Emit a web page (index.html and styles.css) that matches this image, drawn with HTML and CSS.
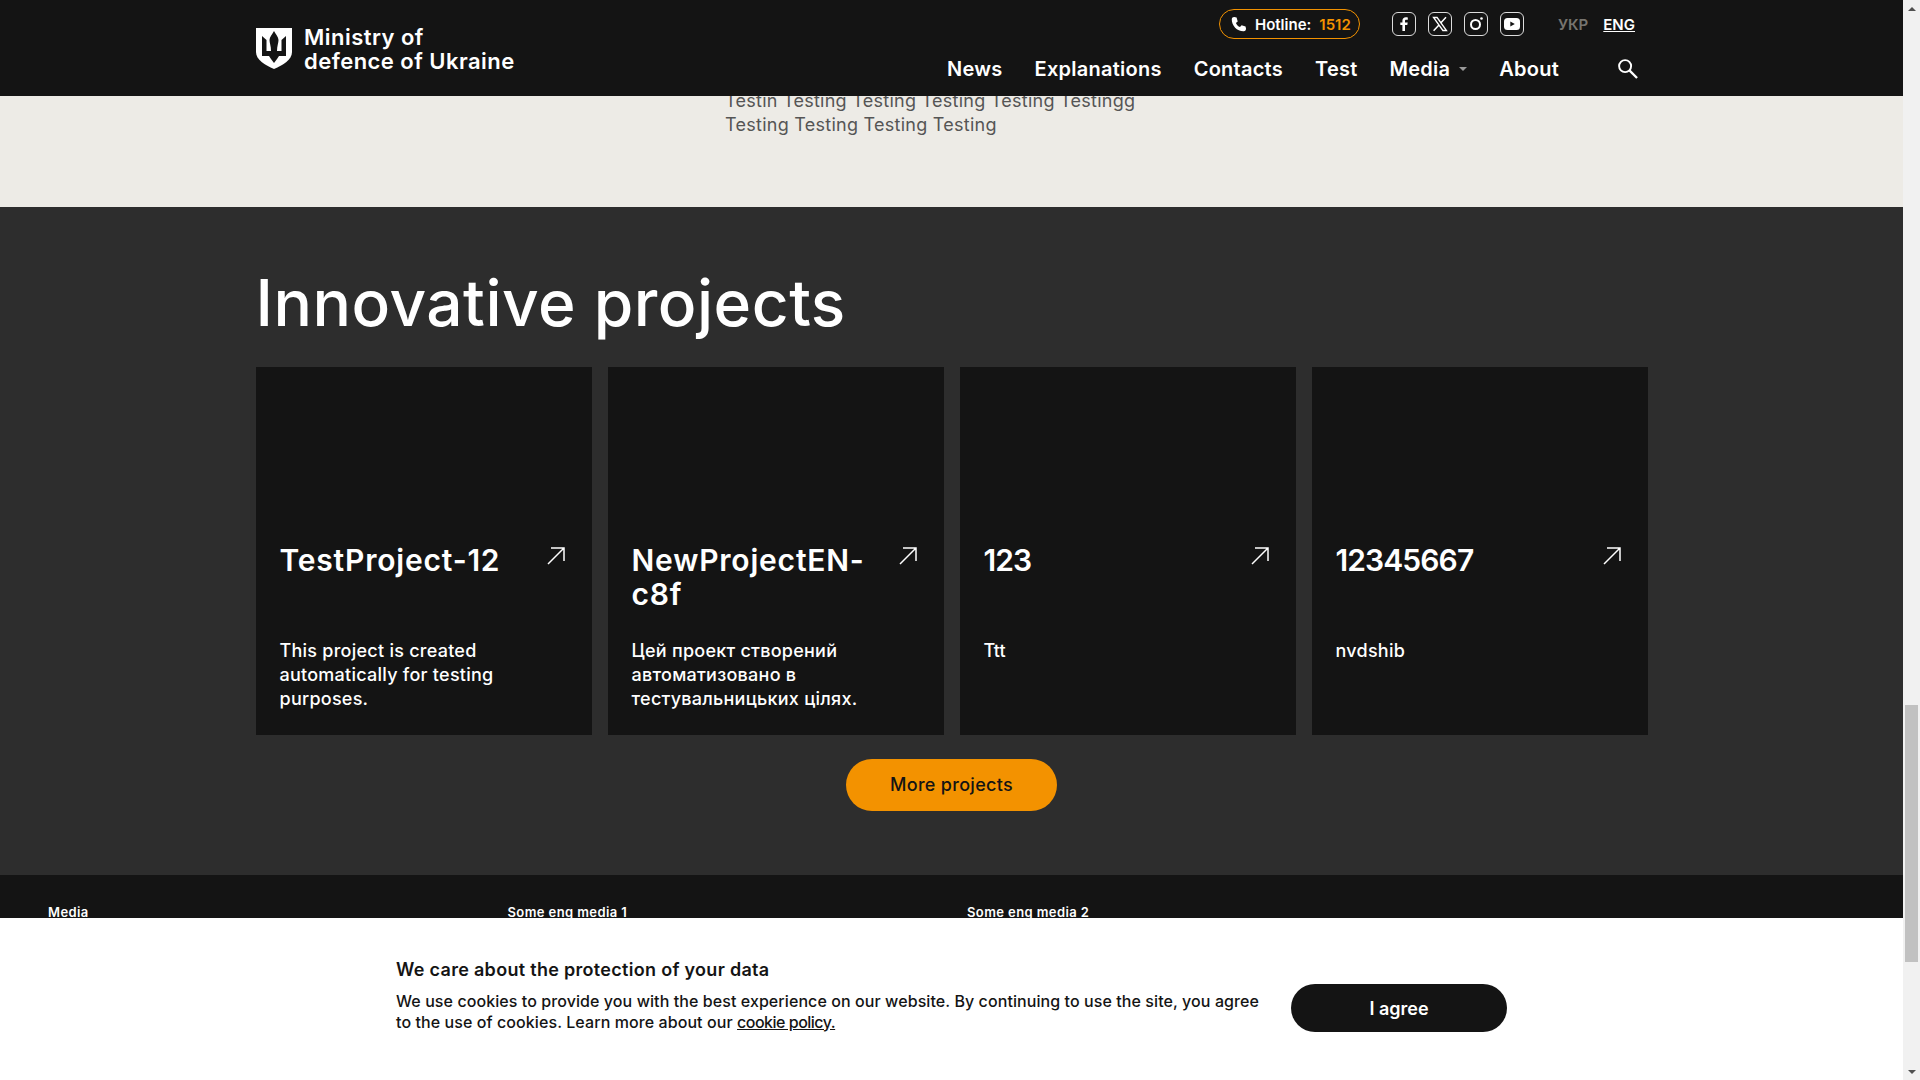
FILE: index.html
```html
<!DOCTYPE html>
<html lang="en">
<head>
<meta charset="utf-8">
<title>Ministry of defence of Ukraine</title>
<link rel="stylesheet" href="styles.css">
</head>
<body>
<div class="app">
  <div class="page">
    <header class="header">
      <a class="brand" href="#">
        <svg class="shield" viewBox="0 0 36 41" width="36" height="41"><path fill="#fff" d="M0 0H36V24C36 32 27 37 18 41C9 37 0 32 0 24Z"/><path fill="#141414" d="M6 8L10.5 12V23H15C15 18 13.5 15 13.5 12C13.5 9 16.5 6 18 3C19.5 6 22.5 9 22.5 12C22.5 15 21 18 21 23H25.5V12L30 8V28H23L21 31L18 35L15 31L13 28H6Z"/></svg>
        <span class="brand-name">Ministry of<br>defence of Ukraine</span>
      </a>
      <div class="header-right">
        <div class="topline">
          <a class="hotline" href="#">
            <svg viewBox="0 0 24 24" width="19" height="19"><path fill="#fff" d="M6.6 2.5l3 .6 1.4 5-2.3 2c1 2.400 2.800 4.200 5.200 5.200l2-2.300 5 1.400.6 3c.1 1.500-1 3-2.800 3.100C10.500 20.800 3.200 13.500 3.500 5.300 3.600 3.500 5.100 2.400 6.600 2.500z"/></svg>
            <span>Hotline:</span><span class="hotline-num">1512</span>
          </a>
          <div class="socials">
            <a class="social" href="#"><svg viewBox="0 0 24 24" width="24" height="24"><path fill="#fff" d="M13 19v-6h2.300l.4-2.500H13V9c0-.8.3-1.300 1.400-1.300h1.400V5.400c-.4 0-1.200-.1-2-.1-2 0-3.400 1.200-3.400 3.500v1.700H8.300V13h2.100v6z"/></svg></a>
            <a class="social" href="#"><svg viewBox="0 0 24 24" width="24" height="24"><path fill="none" stroke="#fff" stroke-width="1.300" d="M5.500 5.500h3.600l9.400 13h-3.600z"/><path fill="none" stroke="#fff" stroke-width="1.500" d="M18 5.200l-5.300 5.900M11 13l-5.400 5.800"/></svg></a>
            <a class="social" href="#"><svg viewBox="0 0 24 24" width="24" height="24"><circle cx="11.500" cy="12.500" r="4.500" fill="none" stroke="#fff" stroke-width="2"/><circle cx="17.500" cy="6.500" r="1.300" fill="#fff"/></svg></a>
            <a class="social" href="#"><svg viewBox="0 0 24 24" width="24" height="24"><rect x="4" y="6" width="16" height="12" rx="3.500" fill="#fff"/><path fill="#141414" d="M10.300 9.500l4.500 2.500-4.500 2.500z"/></svg></a>
          </div>
          <div class="langs"><a class="lang" href="#">УКР</a><a class="lang lang-active" href="#">ENG</a></div>
        </div>
        <nav class="nav">
          <a href="#">News</a>
          <a href="#">Explanations</a>
          <a href="#">Contacts</a>
          <a href="#">Test</a>
          <a class="has-caret" href="#">Media<i class="caret"></i></a>
          <a href="#">About</a>
          <svg class="search" viewBox="0 0 22 22" width="21" height="21"><circle cx="8.500" cy="8.500" r="6.300" fill="none" stroke="#fff" stroke-width="2"/><path stroke="#fff" stroke-width="2.400" d="M13 13l8 8"/></svg>
        </nav>
      </div>
    </header>

    <section class="intro">
      <p>Testin Testing Testing Testing Testing Testingg<br>Testing Testing Testing Testing</p>
    </section>

    <section class="projects">
      <h2>Innovative projects</h2>
      <div class="cards">
        <a class="card" href="#">
          <div class="card-head"><h3>TestProject-12</h3><svg class="arrow" viewBox="0 0 18 18" width="18" height="18"><path fill="none" stroke="#fff" stroke-width="1.500" d="M4 1h13v13M17 1L1 17"/></svg></div>
          <p>This project is created automatically for testing purposes.</p>
        </a>
        <a class="card" href="#">
          <div class="card-head"><h3>NewProjectEN-c8f</h3><svg class="arrow" viewBox="0 0 18 18" width="18" height="18"><path fill="none" stroke="#fff" stroke-width="1.500" d="M4 1h13v13M17 1L1 17"/></svg></div>
          <p>Цей проект створений автоматизовано в тестувальницьких цілях.</p>
        </a>
        <a class="card" href="#">
          <div class="card-head"><h3 class="digits">123</h3><svg class="arrow" viewBox="0 0 18 18" width="18" height="18"><path fill="none" stroke="#fff" stroke-width="1.500" d="M4 1h13v13M17 1L1 17"/></svg></div>
          <p>Ttt</p>
        </a>
        <a class="card" href="#">
          <div class="card-head"><h3 class="digits">12345667</h3><svg class="arrow" viewBox="0 0 18 18" width="18" height="18"><path fill="none" stroke="#fff" stroke-width="1.500" d="M4 1h13v13M17 1L1 17"/></svg></div>
          <p>nvdshib</p>
        </a>
      </div>
      <div class="more"><a class="more-btn" href="#">More projects</a></div>
    </section>

    <footer class="footer">
      <a href="#">Media</a>
      <a href="#">Some eng media 1</a>
      <a href="#">Some eng media 2</a>
    </footer>

    <aside class="cookie">
      <div class="cookie-text">
        <h4>We care about the protection of your data</h4>
        <p>We use cookies to provide you with the best experience on our website. By continuing to use the site, you agree<br>to the use of cookies. Learn more about our <a href="#">cookie policy.</a></p>
      </div>
      <a class="agree" href="#">I agree</a>
    </aside>
  </div>
  <div class="scrollbar">
    <i class="sb-arrow sb-up"></i>
    <div class="sb-track"><div class="sb-thumb"></div></div>
    <i class="sb-arrow sb-down"></i>
  </div>
</div>
</body>
</html>
```
FILE: styles.css
```css
* { box-sizing: border-box; }
html, body { margin: 0; height: 100%; overflow: hidden; }
body { font-family: Inter, "Noto Sans", sans-serif; color: #fff; background: #edebe6; }
a { color: inherit; text-decoration: none; }
h2, h3, h4, p { margin: 0; }

.app { display: flex; height: 1080px; }
.page { position: relative; flex: 1; min-width: 0; overflow: hidden; }

.header {
  position: absolute; top: 0; left: 0; right: 0; height: 96px;
  background: #141414; padding: 0 265px 0 256px;
  display: flex; justify-content: space-between;
}
.brand { display: flex; align-items: flex-start; gap: 12px; padding-top: 28px; }
.shield { display: block; flex: none; }
.brand-name { font-size: 22px; line-height: 24px; font-weight: 600; margin-top: -3px; letter-spacing: .47px; }

.header-right { display: flex; flex-direction: column; align-items: flex-end; }
.topline { display: flex; align-items: center; height: 39px; padding: 9px 3px 0 0; }
.hotline {
  display: flex; align-items: center; width: 141px; height: 30px;
  border: 1px solid #f39200; border-radius: 15px; padding-left: 9px;
  font-size: 15px; font-weight: 600;
}
.hotline svg { margin-right: 7px; }
.hotline-num { color: #f39200; margin-left: 8px; }
.socials { display: flex; gap: 12px; margin-left: 32px; }
.social { width: 24px; height: 24px; border: 1px solid #ddd; border-radius: 6px; display: block; }
.social svg { display: block; margin: -1px; }
.langs { display: flex; gap: 15px; margin-left: 34px; font-size: 15px; font-weight: 600; }
.lang { color: #77746f; }
.lang-active { color: #fff; text-decoration: underline; }

.nav { display: flex; align-items: center; margin-top: 12px; font-size: 20px; font-weight: 600; height: 36px; letter-spacing: .25px; }
.nav a { margin-right: 32px; }
.has-caret { display: flex; align-items: center; }
.caret { width: 0; height: 0; border: 4.500px solid transparent; border-top-color: #999; border-bottom: 0; margin-left: 9px; }
.search { margin: 0 0 2px 26px; }

.intro { height: 207px; padding: 89px 0 0 725px; background: #edebe6; }
.intro p { color: #555; font-size: 18px; line-height: 24px; letter-spacing: .26px; }

.projects { background: #2d2d2d; height: 668px; padding-top: 48px; }
.projects h2 { width: 1392px; margin: 0 auto 16px; font-size: 64px; line-height: 96px; font-weight: 500; letter-spacing: .5px; }
.cards { display: grid; grid-template-columns: repeat(4, 1fr); gap: 16px; width: 1392px; margin: 0 auto; }
.card { display: flex; flex-direction: column; height: 368px; background: #141414; padding: 176px 24px 0; }
.card-head { display: flex; justify-content: space-between; align-items: flex-start; gap: 24px; min-height: 68px; }
.card-head h3 { font-size: 30px; line-height: 34px; font-weight: 600; letter-spacing: .8px; }
.card-head .digits { letter-spacing: -.9px; }
.arrow { flex: none; margin: 4px 3px 0 0; }
.card p { margin-top: 28px; font-size: 18px; line-height: 24px; font-weight: 500; letter-spacing: .25px; }
.more { display: flex; justify-content: center; margin-top: 24px; }
.more-btn {
  display: flex; align-items: center; justify-content: center;
  width: 211px; height: 52px; padding-bottom: 2px; border-radius: 26px;
  background: #f39200; color: #141414; font-size: 18px; font-weight: 500; letter-spacing: .3px;
}

.footer { height: 205px; background: #141414; padding: 28px 48px 0; display: flex; font-size: 13px; font-weight: 600; line-height: 18px; letter-spacing: .4px; }
.footer a { width: 459.500px; }

.cookie {
  position: absolute; left: 0; right: 0; bottom: 0; height: 162px;
  background: #fff; color: #141414;
  display: flex; align-items: center; justify-content: center; gap: 32px;
}
.cookie-text { padding-bottom: 8px; }
.cookie h4 { font-size: 18px; line-height: 24px; font-weight: 600; margin-bottom: 9px; letter-spacing: .3px; }
.cookie p { font-size: 16px; line-height: 21px; font-weight: 500; letter-spacing: .08px; }
.cookie p a { text-decoration: underline; letter-spacing: -.5px; }
.agree {
  display: flex; align-items: center; justify-content: center;
  width: 216px; height: 48px; margin-top: 18px; border-radius: 24px;
  background: #141414; color: #fff; font-size: 18px; font-weight: 600;
}

.scrollbar { flex: none; width: 17px; background: #f1f1f1; display: flex; flex-direction: column; }
.sb-arrow { flex: none; height: 17px; display: flex; align-items: center; justify-content: center; }
.sb-arrow::before { content: ""; width: 0; height: 0; border: 4px solid transparent; }
.sb-up::before { border-bottom-color: #505050; border-top: 0; }
.sb-down::before { border-top-color: #505050; border-bottom: 0; }
.sb-track { flex: 1; padding-top: 688px; }
.sb-thumb { height: 257px; background: #c1c1c1; margin: 0 2px; }
```
